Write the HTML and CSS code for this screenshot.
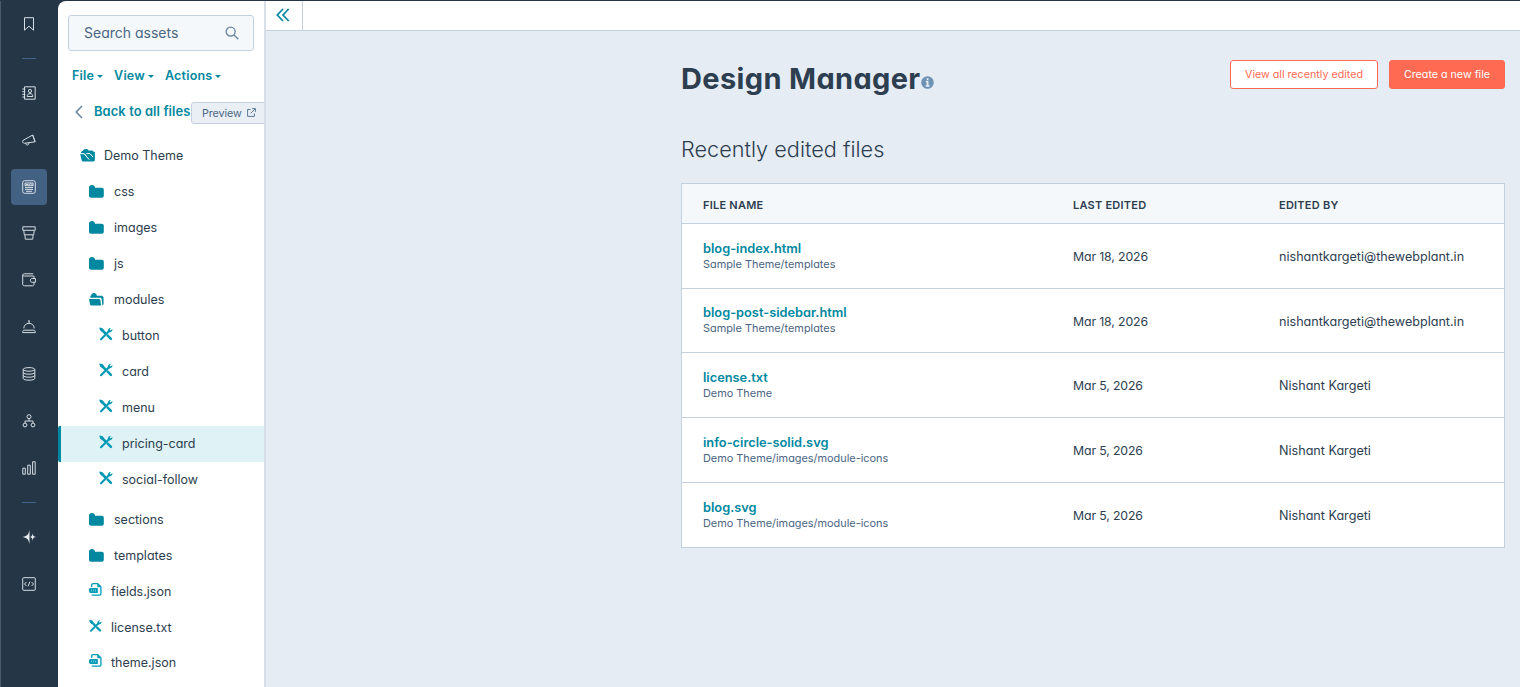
FILE: index.html
```html
<!DOCTYPE html>
<html lang="en">
<head>
  <meta charset="UTF-8" />
  <title>Design Manager</title>
  <meta name="viewport" content="width=device-width, initial-scale=1" />
  <link rel="stylesheet" href="styles.css">
</head>
<body>
  <!-- shared icons -->
  <svg class="sprite" width="0" height="0">
    <symbol id="folder" viewBox="0 0 15 13">
      <path d="M0 2.600C0 1 1.200.1 2.900.1c1.800 0 2.800.8 3.200 2.600h6.400c1.600 0 2.300.8 2.300 2.100v5.600c0 1.500-.9 2.300-2.400 2.300H2.200C.8 12.700 0 12 0 10.800z" />
    </symbol>
    <symbol id="folder-open" viewBox="0 0 15 13">
      <path d="M1.300 4.700C1.300 3.200 1.500 2.600 2.200 2.600 2.400 1 3.300.1 4.900.1c1.700 0 2.700.9 2.900 2.600h4.400c1.200 0 2 .6 2.300 1.600l.1 6.300c0 1.100-.4 1.800-1.200 2l-.7-6.200c-.1-1.100-.6-1.700-1.600-1.700z" />
      <path d="M0 6h10.200c.7 0 1.100.4 1.200 1.100l.7 5.500H2.600c-.9 0-1.400-.5-1.600-1.300z" />
    </symbol>
    <symbol id="tools" viewBox="0 0 14 14">
      <path d="M2 2 6.500 6.500M8.700 8.700l3.200 3.200" stroke-width="2.500" stroke-linecap="round" stroke="currentColor" />
      <path d="M2 12.200 10.300 4" stroke-width="2.100" stroke-linecap="round" stroke="currentColor" />
      <path d="M9 5.300C8.300 3 9.700.9 12 .8L10.700 2.500l.8 1L13.500 2.100C13.700 4.300 11.700 6 9 5.300z" />
      <path d="M.3.5 3.500 1.200 4.800 2.900 2.900 4.800 1.200 3.500z" />
    </symbol>
    <symbol id="json" viewBox="0 0 13 13">
      <path d="M2.700 4V1.800C2.700 1 3.200.7 4 .7h4.700l3.200 3.100v7.300c0 .7-.4 1.100-1.100 1.100H2.700" fill="none" stroke="currentColor" stroke-width="1.300" />
      <path d="M8.300.7v3.600h3.600z" />
      <path d="M1.500 5h7.300v5H1.500C.4 10 0 9 0 7.500S.4 5 1.500 5z" />
      <path d="M2.500 6.500v2M4.500 6.500v2M6.500 6.500v2" stroke="#b9e2ea" stroke-width=".6" />
    </symbol>
  </svg>

  <div class="app">
    <nav class="rail">
      <a class="rail-item bookmark"><svg viewBox="0 0 14 14"><path d="M2.500.7h9v12.500L7 9.200l-4.500 4z" /></svg></a>
      <span class="rail-line"></span>
      <a class="rail-item contacts"><svg viewBox="0 0 14 14"><path d="M2.500.8h10.700v12.400H2.500zM.3 3h3M.3 5.700h3M.3 8.400h3M.3 11h3" /><circle cx="8" cy="5" r="1.600" /><path d="M5.200 10.500c0-2 1-2.900 2.800-2.900s2.800.9 2.800 2.900z" /></svg></a>
      <a class="rail-item marketing"><svg viewBox="0 0 14 14"><path d="M.8 7.500 10.700 2l2.400 6.800-10.700 1.500C1 10.200.4 8.800.8 7.500zM10.700 2l2.400 6.800M3.700 10.300c.2 2.400 3 2.400 3.200-.3" /></svg></a>
      <a class="rail-item content active"><svg viewBox="0 0 14 14"><rect x=".7" y=".7" width="12.600" height="12.600" rx="2" /><path d="M3 5.700V3h8v2.700M3 7.600h8M3 9.400h8M4 11.300h6M3 5.700l2-1.500 2 1 2-1.700 2 2.200z" /></svg></a>
      <a class="rail-item commerce"><svg viewBox="0 0 14 14"><path d="M.8.800h12.400v3.500H.8zM1.800 4.500l.5 4.300h9.400l.5-4.300M2.900 9l.4 4.200h7.400l.4-4.200" /></svg></a>
      <a class="rail-item wallet"><svg viewBox="0 0 14 14"><path d="M11.800 3H2.500C1.300 3 .7 2.500.7 1.900S1.400.8 2.500.8h8.700M.7 2v9c0 1.200.6 1.800 1.700 1.800h8.100c1 0 1.500-.5 1.500-1.500V9.500M12 5.300V3" /><path d="M13.400 5.500h-3.200c-2.500 0-2.500 3.800 0 3.800h3.200z" /></svg></a>
      <a class="rail-item service"><svg viewBox="0 0 14 14"><path d="M1.800 8.400C1.800 5.400 4 3.300 7 3.300s5.200 2.100 5.200 5.100M.7 12.600c0-1.500.4-2.400 1.400-2.400h9.800c1 0 1.400.9 1.400 2.400zM7 3V1M6 1h2" /></svg></a>
      <a class="rail-item data"><svg viewBox="0 0 14 14"><ellipse cx="7" cy="2.400" rx="5.800" ry="1.800" /><path d="M1.200 2.400v9c0 2.400 11.600 2.400 11.600 0v-9M1.200 5.400c0 2.400 11.600 2.400 11.600 0M1.200 8.400c0 2.400 11.600 2.400 11.600 0" /></svg></a>
      <a class="rail-item automation"><svg viewBox="0 0 14 14"><circle cx="7" cy="2.700" r="2" /><circle cx="3" cy="11" r="1.900" /><circle cx="11" cy="11" r="1.900" /><path d="M7 4.800V7M3 9V7h8v2" /></svg></a>
      <a class="rail-item reports"><svg viewBox="0 0 14 14"><path d="M.8 7.200h2.500v6H.8zM5.700 4.200h2.600v9H5.700zM10.600.8h2.600v12.400h-2.600z" /></svg></a>
      <span class="rail-line"></span>
      <a class="rail-item breeze"><svg viewBox="0 0 14 14"><path class="solid" d="M7.500 0v14C6.500 9.200 5 7.600 0 7 5 6.400 6.500 4.800 7.500 0z" /><path class="solid" d="M10.600 3.300c.2 2.500 1 3.400 3.400 3.700-2.400.3-3.200 1.200-3.400 3.700C10.300 8.500 9.800 7.500 8.200 7c1.600-.5 2.100-1.500 2.400-3.700z" /></svg></a>
      <a class="rail-item code"><svg viewBox="0 0 14 14"><rect x=".7" y=".7" width="12.600" height="12.600" rx="1" /><path d="M4.400 5 2.500 7l1.900 2M9.600 5l1.900 2-1.900 2M7.900 4.700 6.100 9.300" /></svg></a>
    </nav>

    <aside class="sidebar">
      <div class="search">
        <span>Search assets</span>
        <svg width="14" height="14" viewBox="0 0 14 14"><circle cx="5.600" cy="5.600" r="4.500" /><path d="M9 9l4.300 4.300" /></svg>
      </div>
      <div class="menus">
        <a>File<i class="caret"></i></a>
        <a>View<i class="caret"></i></a>
        <a>Actions<i class="caret"></i></a>
      </div>
      <div class="back-row">
        <svg class="chevron" width="8" height="14" viewBox="0 0 8 14"><path d="M7 1 1.200 7 7 13" /></svg>
        <a class="back">Back to all files</a>
        <a class="preview">Preview
          <svg width="9" height="9" viewBox="0 0 9 9"><path d="M3.500 1.500H.6v6.900h6.800V5.500M5.200.6h3.200v3.200M8.300.7 3.700 5.300" /></svg>
        </a>
      </div>
      <ul class="tree">
        <li class="root">
          <svg class="icon" width="15" height="13" viewBox="0 0 15 13"><path d="M1 3.600C1.200 2.500 1.800 2 2.800 2c.4-1.200 1.500-1.900 3-1.900 1.300 0 2.200.5 2.700 1.400h3c1 0 1.700.4 2 1.300h.4c.7 0 1 .4 1 1v7c0 1-.6 1.600-1.600 1.600H3.500c-1 0-1.600-.5-1.900-1.500L.2 5.300z" /><path d="M0 4.700h4.200L7 8.200M6.500 4.600H10L13 8M4.200 4.700l5 6" stroke="#fff" stroke-width="1" fill="none" /></svg>
          <span>Demo Theme</span>
        </li>
        <li class="folder"><svg class="icon" width="15" height="13"><use href="#folder" /></svg><span>css</span></li>
        <li class="folder"><svg class="icon" width="15" height="13"><use href="#folder" /></svg><span>images</span></li>
        <li class="folder"><svg class="icon" width="15" height="13"><use href="#folder" /></svg><span>js</span></li>
        <li class="folder"><svg class="icon" width="15" height="13"><use href="#folder-open" /></svg><span>modules</span></li>
        <li class="module"><svg class="icon" width="14" height="14"><use href="#tools" /></svg><span>button</span></li>
        <li class="module"><svg class="icon" width="14" height="14"><use href="#tools" /></svg><span>card</span></li>
        <li class="module"><svg class="icon" width="14" height="14"><use href="#tools" /></svg><span>menu</span></li>
        <li class="module selected"><svg class="icon" width="14" height="14"><use href="#tools" /></svg><span>pricing-card</span></li>
        <li class="module last"><svg class="icon" width="14" height="14"><use href="#tools" /></svg><span>social-follow</span></li>
        <li class="folder"><svg class="icon" width="15" height="13"><use href="#folder" /></svg><span>sections</span></li>
        <li class="folder"><svg class="icon" width="15" height="13"><use href="#folder" /></svg><span>templates</span></li>
        <li class="file"><svg class="icon" width="13" height="13"><use href="#json" /></svg><span>fields.json</span></li>
        <li class="file"><svg class="icon" width="14" height="14"><use href="#tools" /></svg><span>license.txt</span></li>
        <li class="file"><svg class="icon" width="13" height="13"><use href="#json" /></svg><span>theme.json</span></li>
      </ul>
    </aside>

    <main class="main">
      <div class="topbar">
        <a class="collapse"><svg width="14" height="14" viewBox="0 0 14 14"><path d="M7 1 1.300 7 7 13M12.700 1 7 7l5.700 6" /></svg></a>
      </div>
      <div class="content-area">
        <header class="page-header">
          <h1>Design Manager</h1>
          <svg class="info" width="13" height="13" viewBox="0 0 13 13"><circle cx="6.500" cy="6.500" r="6.300" fill="#6f93b5" /><path d="M6.600 2.300v1.800M4.900 5.700h1.700v4M4.700 9.800h3.700" stroke="#e5edf4" stroke-width="1.700" fill="none" /></svg>
          <div class="actions">
            <a class="btn">View all recently edited</a>
            <a class="btn primary">Create a new file</a>
          </div>
        </header>
        <h2>Recently edited files</h2>
        <table class="files">
          <thead>
            <tr><th class="name">File name</th><th class="edited">Last edited</th><th>Edited by</th></tr>
          </thead>
          <tbody>
            <tr>
              <td><a>blog-index.html</a><small>Sample Theme/templates</small></td>
              <td class="date">Mar 18, 2026</td>
              <td>nishantkargeti@thewebplant.in</td>
            </tr>
            <tr>
              <td><a>blog-post-sidebar.html</a><small>Sample Theme/templates</small></td>
              <td class="date">Mar 18, 2026</td>
              <td>nishantkargeti@thewebplant.in</td>
            </tr>
            <tr>
              <td><a>license.txt</a><small>Demo Theme</small></td>
              <td class="date">Mar 5, 2026</td>
              <td>Nishant Kargeti</td>
            </tr>
            <tr>
              <td><a>info-circle-solid.svg</a><small>Demo Theme/images/module-icons</small></td>
              <td class="date">Mar 5, 2026</td>
              <td>Nishant Kargeti</td>
            </tr>
            <tr>
              <td><a>blog.svg</a><small>Demo Theme/images/module-icons</small></td>
              <td class="date">Mar 5, 2026</td>
              <td>Nishant Kargeti</td>
            </tr>
          </tbody>
        </table>
      </div>
    </main>
  </div>
</body>
</html>
```

FILE: styles.css
```css
* {
  box-sizing: border-box;
}
body {
  margin: 0;
  background: #253746;
  color: #2d3e50;
  font-family: Inter, "Open Sans", sans-serif;
  font-feature-settings: "cv11";
  font-size: 13px;
  overflow: hidden;
}
.sprite {
  display: block;
}
.app {
  display: flex;
  height: 100vh;
  padding-top: 1px;
}

/* left navigation rail */
.rail {
  width: 58px;
  flex: none;
  display: flex;
  flex-direction: column;
  align-items: center;
  padding: 5px 1px 0 0;
  border-left: 1px solid #4a5a68;
}
.rail-item {
  width: 36px;
  height: 36px;
  margin-bottom: 11px;
  flex: none;
  display: flex;
  align-items: center;
  justify-content: center;
  border-radius: 4px;
}
.rail-item svg {
  width: 14px;
  height: 14px;
  fill: none;
  stroke: #d5dde4;
  stroke-width: 1;
}
.rail-item svg .solid {
  fill: #e8edf1;
  stroke: none;
}
.rail-item.bookmark {
  margin-bottom: 16px;
}
.rail-item.reports {
  margin-bottom: 16px;
}
.rail-item.commerce {
  margin-top: -1px;
}
.rail-item.active {
  background: #436182;
}
.rail-line {
  width: 14px;
  height: 1px;
  flex: none;
  background: #3f658b;
  margin-bottom: 16px;
}

/* file tree */
.sidebar {
  width: 208px;
  flex: none;
  background: #fff;
  border-right: 2px solid #d7dfea;
  border-top-left-radius: 8px;
  overflow: hidden;
}
.search {
  margin: 14px 10px 0;
  height: 36px;
  padding: 0 14px 0 15px;
  display: flex;
  align-items: center;
  justify-content: space-between;
  background: #f5f8fa;
  border: 1px solid #c3d1de;
  border-radius: 3px;
  color: #4a6583;
  font-size: 14px;
}
.search span {
  padding-bottom: 1px;
}
.search svg {
  fill: none;
  stroke: #6583a2;
  stroke-width: 1.300;
}
.menus {
  display: flex;
  gap: 11px;
  padding: 16px 0 0 14px;
  height: 42px;
  line-height: 17px;
  font-size: 12.500px;
  font-weight: 600;
  letter-spacing: 0.200px;
  color: #0088a0;
}
.caret {
  display: inline-block;
  border: 3px solid transparent;
  border-top-color: #0088a0;
  border-bottom: 0;
  margin-left: 3px;
  vertical-align: 2px;
}
.back-row {
  display: flex;
  align-items: center;
  height: 36px;
  padding-left: 17px;
  white-space: nowrap;
}
.chevron {
  flex: none;
  margin-top: 1px;
  fill: none;
  stroke: #6583a2;
  stroke-width: 1.500;
}
.back {
  width: 97px;
  margin-left: 11px;
  flex: none;
  font-size: 12.900px;
  font-weight: 600;
  letter-spacing: 0.100px;
  color: #0088a0;
}
.preview {
  flex: none;
  width: 76px;
  height: 22px;
  margin-top: 3px;
  padding: 1px 0 0 10px;
  display: flex;
  align-items: center;
  gap: 5px;
  font-size: 10.700px;
  letter-spacing: -0.050px;
  color: #4a6583;
  background: #e9eff5;
  border: 1px solid #c3d1de;
  border-radius: 3px;
}
.preview svg {
  margin-top: -1px;
  fill: none;
  stroke: #5b7897;
}
.tree {
  list-style: none;
  margin: 5px 0 0;
  padding: 0;
  font-size: 12.500px;
}
.tree li {
  display: flex;
  align-items: center;
  height: 36px;
  padding-bottom: 1px;
}
.tree .icon {
  flex: none;
  color: #009ab5;
  fill: currentColor;
}
.tree .root {
  height: 40px;
  padding: 2px 0 0 22px;
}
.root span {
  margin-left: 9px;
}
.tree .folder {
  padding-left: 31px;
}
.tree .folder .icon,
.tree .root .icon {
  color: #0088a0;
}
.tree .folder .icon {
  margin-top: -1px;
}
.folder span {
  margin-left: 10px;
}
.tree .module {
  padding-left: 41px;
}
.tree .module .icon,
.tree .file .icon {
  margin-top: -4px;
}
.module span {
  margin-left: 9px;
}
.tree .last {
  margin-bottom: 4px;
}
.tree .file {
  padding-left: 31px;
}
.tree .file:last-child {
  height: 34px;
}
.file .icon {
  width: 13px;
}
.file span {
  margin-left: 9px;
}
.tree .selected {
  background: #dff2f6;
  border-left: 3px solid #0088a0;
  border-radius: 2px 0 0 2px;
  padding-left: 38px;
}

/* main column */
.main {
  flex: 1;
  background: #e5ecf4;
}
.topbar {
  height: 30px;
  background: #fff;
  border-bottom: 1px solid #c3d1de;
}
.collapse {
  width: 37px;
  height: 29px;
  padding: 0 2px 1px 0;
  display: flex;
  align-items: center;
  justify-content: center;
  border-right: 1px solid #c3d1de;
}
.collapse svg {
  fill: none;
  stroke: #0088a0;
  stroke-width: 1.700;
}
.content-area {
  width: 824px;
  margin-left: 415px;
}
.page-header {
  display: flex;
  height: 72px;
  padding-top: 29px;
}
h1 {
  margin: 0;
  width: 240px;
  white-space: nowrap;
  font-size: 29px;
  line-height: 37px;
  font-weight: 700;
  letter-spacing: 0.350px;
}
.info {
  margin-top: 16px;
}
.actions {
  display: flex;
  gap: 11px;
  margin-left: auto;
}
.btn {
  width: 148px;
  height: 29px;
  border: 1px solid #ff6b52;
  border-radius: 3px;
  background: #fff;
  color: #ff6b52;
  font-size: 10.700px;
  line-height: 27px;
  text-align: center;
  white-space: nowrap;
}
.btn.primary {
  width: 116px;
  background: #ff6b52;
  color: #fff;
}
h2 {
  margin: 0;
  height: 80px;
  padding-top: 30px;
  font-size: 21.700px;
  line-height: 32px;
  font-weight: 300;
}
.files {
  width: 824px;
  table-layout: fixed;
  border-collapse: separate;
  border-spacing: 0;
  border: 1px solid #c3d1de;
  border-bottom: 0;
  background: #fff;
}
.files th,
.files td {
  padding: 0 0 0 21px;
  text-align: left;
  border-bottom: 1px solid #c3d1de;
}
.files th {
  height: 40px;
  padding-top: 3px;
  background: #f5f8fa;
  font-size: 11px;
  font-weight: 600;
  letter-spacing: 0.230px;
  text-transform: uppercase;
}
.files .name {
  width: 370px;
}
.files .edited {
  width: 206px;
}
.files td {
  height: 65px;
  padding-top: 1px;
  font-size: 12.600px;
}
.files td:first-child {
  padding-top: 0;
  padding-bottom: 1px;
}
.files .date {
  font-size: 12.300px;
  letter-spacing: -0.130px;
}
.files tr:nth-child(2) td {
  height: 64px;
}
.files td a {
  display: block;
  font-size: 12.800px;
  line-height: 17px;
  font-weight: 600;
  color: #0088a0;
}
.files small {
  display: block;
  font-size: 10.900px;
  line-height: 15px;
  color: #4a6583;
}
```
